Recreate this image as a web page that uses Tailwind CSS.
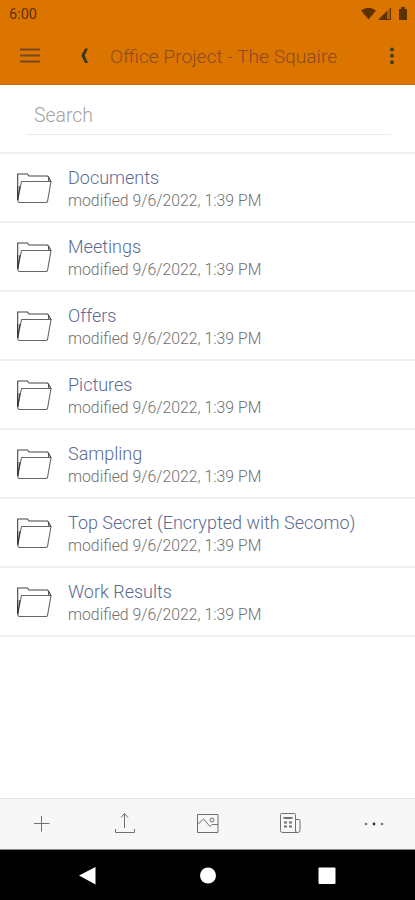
<!DOCTYPE html>
<html lang="en">
<head>
<meta charset="utf-8">
<title>Office Project - The Squaire</title>
<script src="https://cdn.jsdelivr.net/npm/@tailwindcss/browser@4"></script>
</head>
<body class="bg-white">
<svg class="hidden">
  <symbol id="folder" viewBox="0 0 36 32"><path d="M1.700 27.500V2H11.500l1.500 2H31.500l1.200 1.200V9" fill="none" stroke="#444" stroke-width="1.100"/><path d="M5.500 9.500H35L31.500 29.500Q31 30.500 30 30.500H3.500Q2 30.500 1.700 28Z" fill="none" stroke="#666" stroke-width="1.100" stroke-linejoin="round"/><path d="M32.700 5.500L35 9.500M1.700 14v14L4 14" fill="none" stroke="#333"/></symbol>
</svg>
<div class="flex h-[900px] w-[415px] flex-col overflow-hidden font-[Roboto,sans-serif] font-light">
  <header class="h-[85px] shrink-0 border-b border-[#c96b10] bg-[#db7500]">
    <div class="flex h-7 items-center justify-between pl-[9px] pr-[7px]">
      <span class="pt-px text-[14.5px] font-normal text-[#5d3200]">6:00</span>
      <svg class="h-4 w-[48px]" viewBox="0 0 48 16" fill="#5d3200"><path d="M1 4.500Q8.500-1 16 4.500L8.500 13.500Z"/><path d="M18 14L31 1V14Z" opacity=".35"/><path d="M18 14L27 5V14Z"/><path d="M30.500 2v11.500H26" fill="none" stroke="#5d3200"/><path d="M39 3h2V1h4v2h2v11h-8z"/></svg>
    </div>
    <div class="flex h-[56px] items-center">
      <svg class="ml-5 h-4 w-5" viewBox="0 0 20 16" stroke="#76481f" stroke-width="2"><path d="M0 1.500h20M0 7.500h20M0 13.500h20"/></svg>
      <svg class="ml-[41px] h-4 w-2" viewBox="0 0 8 16" fill="#343a20"><path d="M4 0.500H7L3.700 7.500L7 15H4L0.300 7.500Z"/></svg>
      <h1 class="ml-[21px] flex-1 whitespace-nowrap pt-[2px] text-[19.2px] leading-6 text-[#8a4b25]">Office Project - The Squaire</h1>
      <svg class="mr-[20px] h-[18px] w-[6px]" viewBox="0 0 6 18" fill="#42402a"><circle cx="3" cy="2.500" r="2"/><circle cx="3" cy="8.800" r="2"/><circle cx="3" cy="15.200" r="2"/></svg>
    </div>
  </header>
  <div class="h-[67px] shrink-0 pl-[26px] pr-6 pt-[13px]">
    <div class="h-[37px] border-b border-[#ececec] pl-[8px] pt-[5px] text-[19.4px] leading-[25px] text-[#a3a3a3]">Search</div>
  </div>
  <main id="list" class="flex-1 border-t-2 border-[#efefef]"></main>
  <nav class="flex h-[52px] shrink-0 items-center border-b border-t border-b-[#888] border-t-[#e3e3e3] bg-[#f7f7f7] text-[#707070]">
    <div class="grid w-full grid-cols-5 justify-items-center">
      <svg class="size-6" viewBox="0 0 24 24" fill="none" stroke="currentColor"><path d="M4 11.500H19.500M11.500 4V19.500"/></svg>
      <svg class="size-6" viewBox="0 0 24 24" fill="none" stroke="currentColor"><path d="M2.500 17v3.500h19V17M11.500 16V2M8 5.500L11.500 1.500l3.500 4"/></svg>
      <svg class="size-6" viewBox="0 0 24 24" fill="none" stroke="currentColor"><path d="M1.500 2.500h20.500v18H1.500zM1.500 12.500L7.500 7l6.500 7.500 2-2H22"/><circle cx="16" cy="8" r="1.900"/></svg>
      <svg class="size-6" viewBox="0 0 24 24" fill="none" stroke="currentColor"><path d="M2.500 1.500h13q1 0 1 1V19q0 1.500 2 1.500t2.500-1.500V8.500q0-1-1-1h-3.500M18.500 20.500H3.500q-2 0-2-2V2.500q0-1 1-1"/><path d="M4.500 6h9" stroke-width="2"/><path d="M5 10.500h3M10 10.500h3M5 14.500h3M10 14.500h3" stroke-width="2"/></svg>
      <svg class="size-6" viewBox="0 0 24 24" fill="currentColor"><circle cx="4" cy="12" r="1.300"/><circle cx="12" cy="12" r="1.400" fill="#333"/><circle cx="20" cy="12" r="1.300"/></svg>
    </div>
  </nav>
  <footer class="flex h-[50px] shrink-0 items-center bg-black">
    <svg class="h-[50px] w-full" viewBox="0 0 415 50" fill="#fff"><path d="M79 25.500L95.500 17V34.500Z"/><circle cx="208" cy="25.500" r="8"/><rect x="318.500" y="17.500" width="17" height="16.500" rx="1"/></svg>
  </footer>
</div>
<script>
const names = ["Documents", "Meetings", "Offers", "Pictures", "Sampling", "Top Secret (Encrypted with Secomo)", "Work Results"];
document.getElementById("list").innerHTML = names.map(n => `
  <div class="flex h-[69px] items-center border-b-2 border-[#efefef] pl-4">
    <svg class="mt-px h-8 w-9 shrink-0"><use href="#folder"/></svg>
    <div class="ml-4 whitespace-nowrap pt-[2px]">
      <div class="text-[18px] leading-[24px] text-[#5a6a92]">${n}</div>
      <div class="text-[15.8px] leading-[21px] text-[#707070]">modified 9/6/2022, 1:39 PM</div>
    </div>
  </div>`).join("");
</script>
</body>
</html>
